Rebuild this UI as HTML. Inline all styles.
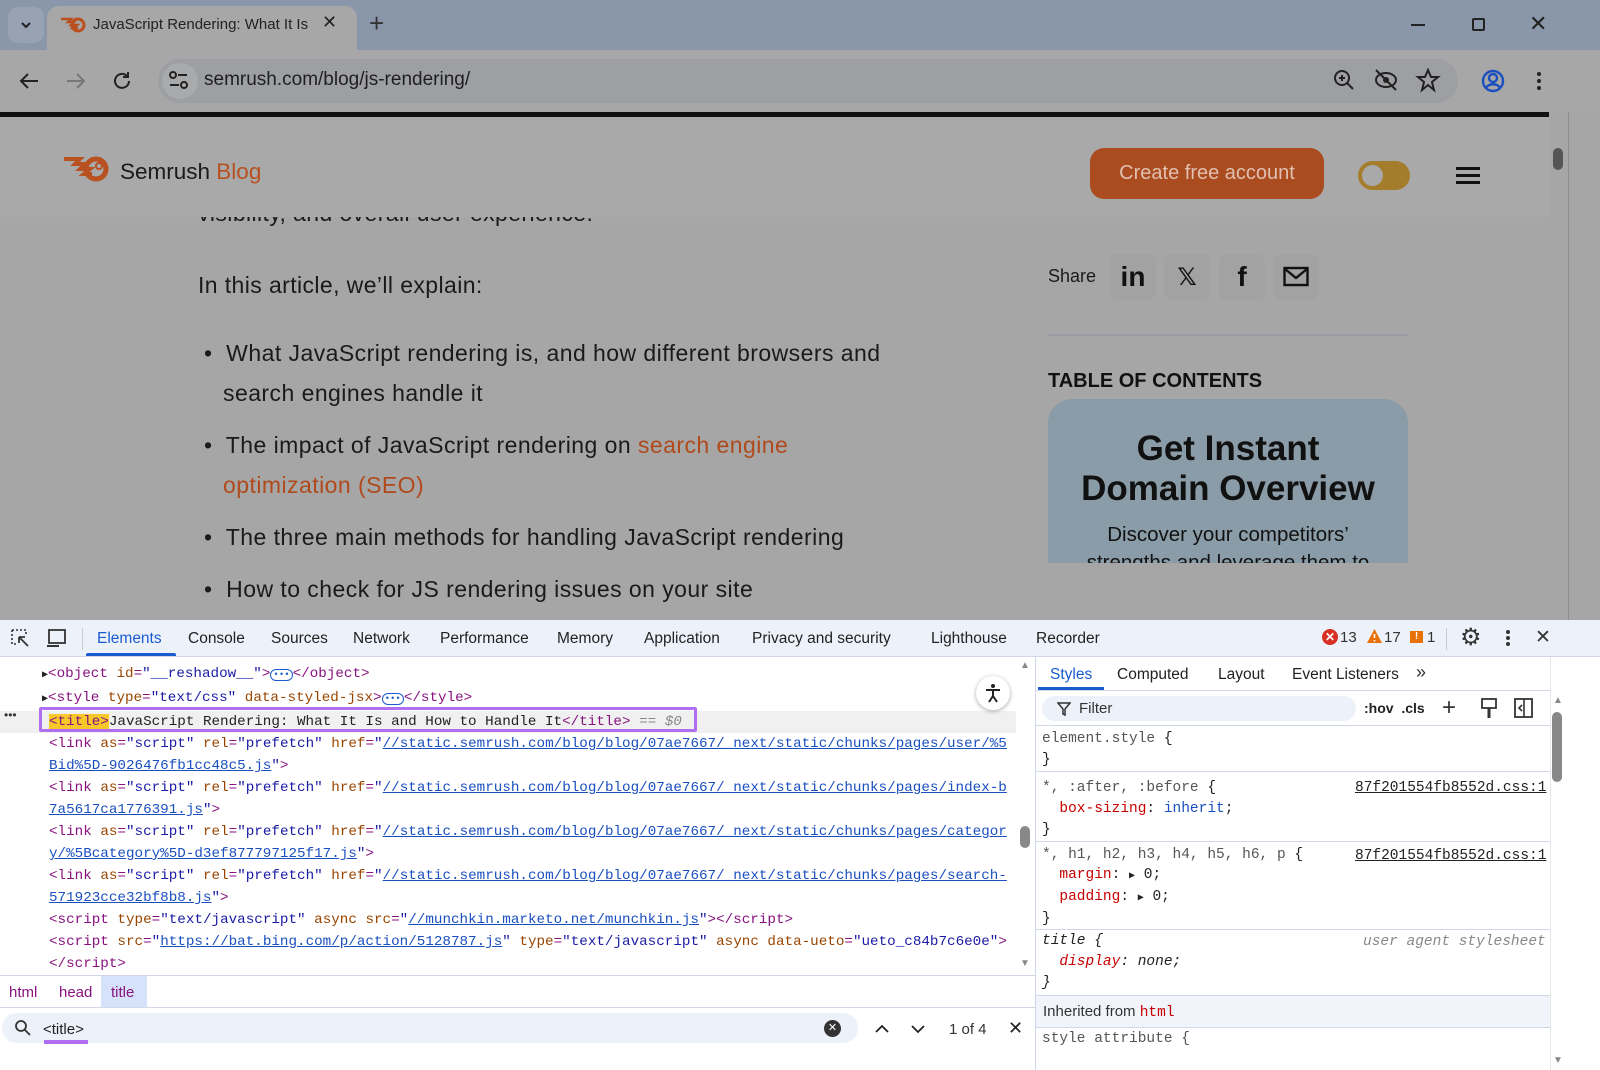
<!DOCTYPE html>
<html><head><meta charset="utf-8"><style>
*{margin:0;padding:0;box-sizing:border-box}
body{width:1600px;height:1070px;overflow:hidden;position:relative;background:#a6a6a6;font-family:"Liberation Sans",sans-serif}
.a{position:absolute;white-space:nowrap}
.m{font-family:"Liberation Mono",monospace;font-size:14.5px}
.t{color:#881280}.n{color:#994500}.v{color:#1a1aa6}.l{color:#1a4fc0;text-decoration:underline}
.p{color:#c80000}.g{color:#555}
.tab{position:absolute;top:630px;font-size:15.5px;color:#222}
.code{font-size:14.25px}
.code div{white-space:nowrap}
</style></head><body>
<!-- tab strip -->
<div class="a" style="left:0;top:0;width:1600px;height:50px;background:#8a97aa"></div>
<div class="a" style="left:8px;top:7px;width:36px;height:36px;border-radius:10px;background:#97a2b2"></div>
<svg class="a" style="left:18px;top:17px" width="16" height="16"><path d="M4 6l4 4 4-4" stroke="#222" stroke-width="2" fill="none"/></svg>
<div class="a" style="left:47px;top:6px;width:310px;height:46px;border-radius:12px 12px 0 0;background:#a7a7a7"></div>
<svg class="a" style="left:60px;top:16px" width="26" height="18"><path d="M1 3h10l-3 3h6l-3 3h6l-4 3h5" stroke="#b8501f" stroke-width="2.5" fill="none"/><circle cx="18" cy="9" r="6" fill="none" stroke="#b8501f" stroke-width="3"/></svg>
<div class="a" style="left:93px;top:16px;font-size:15px;color:#222">JavaScript Rendering: What It Is</div>
<div class="a" style="left:322px;top:12px;font-size:18px;color:#222">✕</div>
<div class="a" style="left:369px;top:8px;font-size:26px;color:#333">+</div>
<div class="a" style="left:1411px;top:24px;width:14px;height:2px;background:#222"></div>
<div class="a" style="left:1472px;top:18px;width:13px;height:13px;border:2px solid #222;border-radius:2px"></div>
<div class="a" style="left:1529px;top:11px;font-size:22px;color:#222">✕</div>
<!-- toolbar -->
<div class="a" style="left:0;top:50px;width:1600px;height:62px;background:#a7a7a7"></div>
<svg class="a" style="left:18px;top:70px" width="90" height="22"><path d="M20 11H4M10 4l-7 7 7 7" stroke="#222" stroke-width="2" fill="none"/><path d="M65 11H49M59 4l7 7-7 7" stroke="#777" stroke-width="2" fill="none"/></svg>
<svg class="a" style="left:110px;top:69px" width="24" height="24"><path d="M19 12a7 7 0 1 1-2-5M18 3v5h-5" stroke="#222" stroke-width="2" fill="none"/></svg>
<div class="a" style="left:158px;top:59px;width:1300px;height:44px;border-radius:22px;background:#9d9fa2"></div>
<div class="a" style="left:162px;top:63px;width:36px;height:36px;border-radius:18px;background:#a9aaac"></div>
<svg class="a" style="left:168px;top:70px" width="22" height="20"><circle cx="5" cy="5" r="3" fill="none" stroke="#222" stroke-width="2"/><path d="M10 5h9M2 15h9" stroke="#222" stroke-width="2"/><circle cx="16" cy="15" r="3" fill="none" stroke="#222" stroke-width="2"/></svg>
<div class="a" style="left:204px;top:69px;font-size:19px;color:#1f1f1f">semrush.com/blog/js-rendering/</div>
<svg class="a" style="left:1332px;top:68px" width="110" height="26"><circle cx="10" cy="10" r="7" fill="none" stroke="#222" stroke-width="2"/><path d="M15 15l6 6M7 10h6M10 7v6" stroke="#222" stroke-width="2"/><ellipse cx="54" cy="12" rx="10" ry="7" fill="none" stroke="#222" stroke-width="2"/><circle cx="54" cy="12" r="3" fill="#222"/><path d="M44 2l20 20" stroke="#222" stroke-width="2"/><path d="M96 2l3 7h7l-6 5 2 8-6-5-6 5 2-8-6-5h7z" fill="none" stroke="#222" stroke-width="2"/></svg>
<svg class="a" style="left:1480px;top:68px" width="26" height="26"><circle cx="13" cy="13" r="10" fill="none" stroke="#1a4fc0" stroke-width="2.4"/><circle cx="13" cy="10" r="4" fill="none" stroke="#1a4fc0" stroke-width="2.4"/><path d="M6 20c3-5 11-5 14 0" stroke="#1a4fc0" stroke-width="2.4" fill="none"/></svg>
<div class="a" style="left:1537px;top:72px;width:4px;height:4px;border-radius:2px;background:#222;box-shadow:0 7px 0 #222,0 14px 0 #222"></div>
<div class="a" style="left:0;top:112px;width:1549px;height:5px;background:#111"></div>
<!-- page -->
<div class="a" style="left:0;top:117px;width:1549px;height:100px;background:#a9a9a9"></div>
<svg class="a" style="left:62px;top:155px" width="48" height="30"><path d="M2 4h16l-5 5h10l-5 5h10l-6 5h8" stroke="#b8501f" stroke-width="4" fill="none"/><circle cx="34" cy="14" r="10" fill="none" stroke="#b8501f" stroke-width="5"/><circle cx="37" cy="11" r="3" fill="none" stroke="#b8501f" stroke-width="2"/></svg>
<div class="a" style="left:120px;top:159px;font-size:22.5px;color:#1a1a1a">Semrush <span style="color:#b8501f">Blog</span></div>
<div class="a" style="left:1090px;top:148px;width:234px;height:51px;border-radius:14px;background:#ab4b20;color:#e0c0b0;font-size:20px;text-align:center;line-height:51px">Create free account</div>
<div class="a" style="left:1358px;top:161px;width:52px;height:29px;border-radius:15px;background:#a37d2c"></div>
<div class="a" style="left:1362px;top:165px;width:21px;height:21px;border-radius:11px;background:#a9a9a9"></div>
<div class="a" style="left:1456px;top:167px;width:24px;height:3px;background:#111;box-shadow:0 7px 0 #111,0 14px 0 #111"></div>
<div class="a" style="left:198px;top:200px;font-size:23px;letter-spacing:0.4px;color:#1a1a1a;clip-path:inset(17px 0 0 0)">visibility, and overall user experience.</div>
<div class="a" style="left:198px;top:270px;font-size:23px;letter-spacing:0.4px;color:#1a1a1a;line-height:30px">In this article, we’ll explain:</div>
<div class="a" style="left:204px;top:333px;font-size:23px;letter-spacing:0.45px;line-height:40px;color:#1a1a1a">
<div>•&nbsp; What JavaScript rendering is, and how different browsers and</div>
<div style="padding-left:19px">search engines handle it</div>
<div style="margin-top:12px">•&nbsp; The impact of JavaScript rendering on <span style="color:#b04a1c">search engine</span></div>
<div style="padding-left:19px;color:#b04a1c">optimization (SEO)</div>
<div style="margin-top:12px">•&nbsp; The three main methods for handling JavaScript rendering</div>
<div style="margin-top:12px">•&nbsp; How to check for JS rendering issues on your site</div>
</div>
<div class="a" style="left:1048px;top:266px;font-size:18px;color:#1a1a1a">Share</div>
<div class="a" style="left:1110px;top:254px;width:46px;height:46px;border-radius:8px;background:#a2a2a2;font:bold 28px 'Liberation Sans';text-align:center;line-height:46px;color:#111">in</div>
<div class="a" style="left:1164px;top:254px;width:46px;height:46px;border-radius:8px;background:#a2a2a2;font:bold 24px 'DejaVu Sans';text-align:center;line-height:46px;color:#111">𝕏</div>
<div class="a" style="left:1219px;top:254px;width:46px;height:46px;border-radius:8px;background:#a2a2a2;font:bold 28px 'Liberation Sans';text-align:center;line-height:46px;color:#111">f</div>
<div class="a" style="left:1273px;top:254px;width:46px;height:46px;border-radius:8px;background:#a2a2a2"></div>
<svg class="a" style="left:1283px;top:266px" width="26" height="22"><rect x="1.5" y="2" width="23" height="17" fill="none" stroke="#111" stroke-width="2.4"/><path d="M2 3l11 9 11-9" stroke="#111" stroke-width="2.4" fill="none"/></svg>
<div class="a" style="left:1048px;top:334px;width:360px;height:2px;background:#9c9ca4"></div>
<div class="a" style="left:1048px;top:370px;font-size:20px;font-weight:bold;color:#111">TABLE OF CONTENTS</div>
<div class="a" style="left:1048px;top:399px;width:360px;height:164px;border-radius:24px 24px 0 0;background:#8a9ca8;overflow:hidden;text-align:center;color:#111">
<div style="margin-top:30px;font-size:35px;font-weight:bold;line-height:40px">Get Instant<br>Domain Overview</div>
<div style="margin-top:12px;font-size:20.5px;line-height:28px">Discover your competitors’<br>strengths and leverage them to</div>
</div>
<div class="a" style="left:1549px;top:112px;width:20px;height:508px;background:#a6a6a6"></div>
<div class="a" style="left:1553px;top:148px;width:10px;height:22px;border-radius:5px;background:#555"></div>
<div class="a" style="left:1568px;top:112px;width:1px;height:508px;background:#8e8e8e"></div>
<!-- devtools -->
<div class="a" style="left:0;top:620px;width:1600px;height:450px;background:#fff"></div>
<div class="a" style="left:0;top:620px;width:1600px;height:37px;background:#edf2fa;border-bottom:1px solid #d0d8e8"></div>
<svg class="a" style="left:10px;top:628px" width="60" height="22"><path d="M2 2h14v6M2 2v14h6" stroke="#333" stroke-width="1.6" stroke-dasharray="2 2" fill="none"/><path d="M9 9l9 9M9 9v6M9 9h6" stroke="#333" stroke-width="1.8" fill="none"/><rect x="39" y="2" width="16" height="13" fill="none" stroke="#333" stroke-width="1.8"/><path d="M37 18h12" stroke="#333" stroke-width="2"/></svg>
<div class="a" style="left:82px;top:628px;width:1px;height:22px;background:#ccc"></div>
<div class="tab" style="left:97px;color:#1a5bd0">Elements</div>
<div class="a" style="left:86px;top:653px;width:90px;height:3px;background:#1a5bd0;border-radius:2px 2px 0 0"></div>
<div class="tab" style="left:188px">Console</div>
<div class="tab" style="left:271px">Sources</div>
<div class="tab" style="left:353px">Network</div>
<div class="tab" style="left:440px">Performance</div>
<div class="tab" style="left:557px">Memory</div>
<div class="tab" style="left:644px">Application</div>
<div class="tab" style="left:752px">Privacy and security</div>
<div class="tab" style="left:931px">Lighthouse</div>
<div class="tab" style="left:1036px">Recorder</div>
<div class="a" style="left:1322px;top:629px;width:16px;height:16px;border-radius:8px;background:#d93025;color:#fff;font-size:12px;text-align:center;line-height:16px;font-weight:bold">✕</div>
<div class="a" style="left:1340px;top:629px;font-size:15px;color:#333">13</div>
<svg class="a" style="left:1366px;top:628px" width="17" height="16"><path d="M8.5 1L16 15H1z" fill="#e8710a"/><path d="M8.5 6v4M8.5 12v1.5" stroke="#fff" stroke-width="1.6"/></svg>
<div class="a" style="left:1384px;top:629px;font-size:15px;color:#333">17</div>
<div class="a" style="left:1410px;top:631px;width:13px;height:12px;background:#e8710a;color:#fff;font-size:10px;text-align:center;line-height:12px;font-weight:bold">!</div>
<div class="a" style="left:1427px;top:629px;font-size:15px;color:#333">1</div>
<div class="a" style="left:1446px;top:628px;width:1px;height:22px;background:#ccc"></div>
<div class="a" style="left:1460px;top:623px;font-size:24px;color:#333">⚙</div>
<div class="a" style="left:1506px;top:630px;width:4px;height:4px;border-radius:2px;background:#333;box-shadow:0 6px 0 #333,0 12px 0 #333"></div>
<div class="a" style="left:1535px;top:626px;font-size:19px;color:#333">✕</div>
<!-- elements panel -->
<div class="m code" style="position:absolute;left:0;top:663px;width:1016px;height:310px;overflow:hidden;line-height:22px;color:#222">
<div style="padding-left:42px"><span style="font-size:10px">▶</span><span class="t">&lt;object </span><span class="n">id</span><span class="t">=</span><span class="v">"__reshadow__"</span><span class="t">&gt;</span><span style="border:1px solid #1a5bd0;border-radius:6px;font-size:9px;color:#1a5bd0;padding:0 2px">•••</span><span class="t">&lt;/object&gt;</span></div>
<div style="padding-left:42px"><span style="font-size:10px">▶</span><span class="t">&lt;style </span><span class="n">type</span><span class="t">=</span><span class="v">"text/css"</span> <span class="n">data-styled-jsx</span><span class="t">&gt;</span><span style="border:1px solid #1a5bd0;border-radius:6px;font-size:9px;color:#1a5bd0;padding:0 2px">•••</span><span class="t">&lt;/style&gt;</span></div>
<div style="padding-left:49px;background:#f0f0f0"><span class="t" style="background:#f6c82a">&lt;title&gt;</span>JavaScript Rendering: What It Is and How to Handle It<span class="t">&lt;/title&gt;</span> <span style="color:#888;font-style:italic">== $0</span></div>
<div style="padding-left:49px"><span class="t">&lt;link </span><span class="n">as</span><span class="t">=</span><span class="v">"script"</span> <span class="n">rel</span><span class="t">=</span><span class="v">"prefetch"</span> <span class="n">href</span><span class="t">=</span><span class="v">"</span><span class="l">//static.semrush.com/blog/blog/07ae7667/_next/static/chunks/pages/user/%5</span></div>
<div style="padding-left:49px"><span class="l">Bid%5D-9026476fb1cc48c5.js</span><span class="v">"</span><span class="t">&gt;</span></div>
<div style="padding-left:49px"><span class="t">&lt;link </span><span class="n">as</span><span class="t">=</span><span class="v">"script"</span> <span class="n">rel</span><span class="t">=</span><span class="v">"prefetch"</span> <span class="n">href</span><span class="t">=</span><span class="v">"</span><span class="l">//static.semrush.com/blog/blog/07ae7667/_next/static/chunks/pages/index-b</span></div>
<div style="padding-left:49px"><span class="l">7a5617ca1776391.js</span><span class="v">"</span><span class="t">&gt;</span></div>
<div style="padding-left:49px"><span class="t">&lt;link </span><span class="n">as</span><span class="t">=</span><span class="v">"script"</span> <span class="n">rel</span><span class="t">=</span><span class="v">"prefetch"</span> <span class="n">href</span><span class="t">=</span><span class="v">"</span><span class="l">//static.semrush.com/blog/blog/07ae7667/_next/static/chunks/pages/categor</span></div>
<div style="padding-left:49px"><span class="l">y/%5Bcategory%5D-d3ef877797125f17.js</span><span class="v">"</span><span class="t">&gt;</span></div>
<div style="padding-left:49px"><span class="t">&lt;link </span><span class="n">as</span><span class="t">=</span><span class="v">"script"</span> <span class="n">rel</span><span class="t">=</span><span class="v">"prefetch"</span> <span class="n">href</span><span class="t">=</span><span class="v">"</span><span class="l">//static.semrush.com/blog/blog/07ae7667/_next/static/chunks/pages/search-</span></div>
<div style="padding-left:49px"><span class="l">571923cce32bf8b8.js</span><span class="v">"</span><span class="t">&gt;</span></div>
<div style="padding-left:49px"><span class="t">&lt;script </span><span class="n">type</span><span class="t">=</span><span class="v">"text/javascript"</span> <span class="n">async src</span><span class="t">=</span><span class="v">"</span><span class="l">//munchkin.marketo.net/munchkin.js</span><span class="v">"</span><span class="t">&gt;&lt;/script&gt;</span></div>
<div style="padding-left:49px"><span class="t">&lt;script </span><span class="n">src</span><span class="t">=</span><span class="v">"</span><span class="l">https://bat.bing.com/p/action/5128787.js</span><span class="v">"</span> <span class="n">type</span><span class="t">=</span><span class="v">"text/javascript"</span> <span class="n">async data-ueto</span><span class="t">=</span><span class="v">"ueto_c84b7c6e0e"</span><span class="t">&gt;</span></div>
<div style="padding-left:49px"><span class="t">&lt;/script&gt;</span></div>
</div>
<div class="a" style="left:39px;top:707px;width:658px;height:25px;border:3px solid #b06ef0;border-radius:2px"></div>
<div class="a" style="left:4px;top:708px;font-size:12px;color:#333">•••</div>
<div class="a" style="left:976px;top:676px;width:34px;height:34px;border-radius:17px;background:#fff;box-shadow:0 1px 4px rgba(0,0,0,.35)"></div>
<svg class="a" style="left:983px;top:683px" width="20" height="20"><circle cx="10" cy="3" r="2" fill="#222"/><path d="M3 7h14M10 7v6M10 13l-4 6M10 13l4 6" stroke="#222" stroke-width="2" fill="none"/></svg>
<div class="a" style="left:1020px;top:660px;font-size:10px;color:#888">▲</div>
<div class="a" style="left:1020px;top:826px;width:10px;height:22px;border-radius:5px;background:#888"></div>
<div class="a" style="left:1020px;top:958px;font-size:10px;color:#888">▼</div>
<div class="a" style="left:1035px;top:657px;width:1px;height:413px;background:#d0d8e8"></div>
<div class="a" style="left:0;top:975px;width:1035px;height:1px;background:#d0d8e8"></div>
<div class="a" style="left:101px;top:976px;width:46px;height:31px;background:#d6e2fa"></div>
<div class="a" style="left:9px;top:984px;font-size:15px;color:#881280">html</div>
<div class="a" style="left:59px;top:984px;font-size:15px;color:#881280">head</div>
<div class="a" style="left:111px;top:984px;font-size:15px;color:#881280">title</div>
<div class="a" style="left:0;top:1007px;width:1035px;height:1px;background:#d0d8e8"></div>
<div class="a" style="left:2px;top:1013px;width:856px;height:30px;border-radius:15px;background:#edf2fa"></div>
<svg class="a" style="left:14px;top:1019px" width="18" height="18"><circle cx="7" cy="7" r="5" fill="none" stroke="#333" stroke-width="1.8"/><path d="M11 11l5 5" stroke="#333" stroke-width="1.8"/></svg>
<div class="a" style="left:43px;top:1021px;font-size:15px;color:#222">&lt;title&gt;</div>
<div class="a" style="left:44px;top:1040px;width:44px;height:4px;background:#b06ef0"></div>
<div class="a" style="left:824px;top:1020px;width:17px;height:17px;border-radius:9px;background:#333;color:#fff;font-size:11px;text-align:center;line-height:17px">✕</div>
<svg class="a" style="left:874px;top:1022px" width="60" height="14"><path d="M2 10l6-6 6 6M38 4l6 6 6-6" stroke="#222" stroke-width="1.8" fill="none"/></svg>
<div class="a" style="left:949px;top:1021px;font-size:15px;color:#333">1 of 4</div>
<div class="a" style="left:1008px;top:1018px;font-size:18px;color:#222">✕</div>
<!-- styles panel -->
<div class="a" style="left:1050px;top:666px;font-size:15.5px;color:#1a5bd0">Styles</div>
<div class="a" style="left:1038px;top:687px;width:66px;height:3px;background:#1a5bd0"></div>
<div class="a" style="left:1117px;top:666px;font-size:15.5px;color:#222">Computed</div>
<div class="a" style="left:1218px;top:666px;font-size:15.5px;color:#222">Layout</div>
<div class="a" style="left:1292px;top:666px;font-size:15.5px;color:#222">Event Listeners</div>
<div class="a" style="left:1416px;top:662px;font-size:18px;color:#333">»</div>
<div class="a" style="left:1036px;top:690px;width:514px;height:1px;background:#d0d8e8"></div>
<div class="a" style="left:1042px;top:696px;width:314px;height:25px;border-radius:13px;background:#edf2fa"></div>
<svg class="a" style="left:1057px;top:702px" width="14" height="14"><path d="M1 1h12l-5 6v6l-2-1V7z" fill="none" stroke="#333" stroke-width="1.5"/></svg>
<div class="a" style="left:1079px;top:700px;font-size:15px;color:#333">Filter</div>
<div class="a" style="left:1364px;top:700px;font-size:14px;color:#222;font-weight:bold">:hov&nbsp; .cls</div>
<div class="a" style="left:1442px;top:694px;font-size:24px;color:#333">+</div>
<svg class="a" style="left:1480px;top:698px" width="60" height="22"><rect x="2" y="1" width="14" height="9" fill="none" stroke="#333" stroke-width="1.8"/><path d="M9 10v10" stroke="#333" stroke-width="3"/><rect x="35" y="1" width="17" height="18" fill="none" stroke="#333" stroke-width="1.8"/><path d="M44 1v18M42 7l-3 3 3 3" stroke="#333" stroke-width="1.6" fill="none"/></svg>
<div class="a" style="left:1036px;top:725px;width:514px;height:1px;background:#d0d8e8"></div>
<div class="a m" style="left:1042px;top:729px;line-height:21px;color:#222"><span class="g">element.style</span> {<br>}</div>
<div class="a" style="left:1036px;top:771px;width:514px;height:1px;background:#d0d8e8"></div>
<div class="a m" style="left:1042px;top:778px;line-height:21px;color:#222"><span class="g">*, :after, :before</span> {<br>&nbsp;&nbsp;<span class="p">box-sizing</span>: <span style="color:#1a4fc0">inherit</span>;<br>}</div>
<div class="a m" style="left:1355px;top:780px;color:#222;text-decoration:underline">87f201554fb8552d.css:1</div>
<div class="a" style="left:1036px;top:841px;width:514px;height:1px;background:#d0d8e8"></div>
<div class="a m" style="left:1042px;top:845px;line-height:20px;color:#222"><span class="g">*, h1, h2, h3, h4, h5, h6, p</span> {<br>&nbsp;&nbsp;<span class="p">margin</span>: <span style="font-size:10px">▶</span> 0;<br>&nbsp;&nbsp;<span class="p">padding</span>: <span style="font-size:10px">▶</span> 0;<br>}</div>
<div class="a m" style="left:1355px;top:848px;color:#222;text-decoration:underline">87f201554fb8552d.css:1</div>
<div class="a" style="left:1036px;top:929px;width:514px;height:1px;background:#d0d8e8"></div>
<div class="a m" style="left:1042px;top:931px;line-height:21px;color:#222;font-style:italic">title {<br>&nbsp;&nbsp;<span class="p">display</span>: none;<br>}</div>
<div class="a m" style="left:1363px;top:934px;color:#888;font-style:italic">user agent stylesheet</div>
<div class="a" style="left:1036px;top:995px;width:514px;height:33px;background:#f1f4fb;border-top:1px solid #d0d8e8;border-bottom:1px solid #d0d8e8"></div>
<div class="a" style="left:1043px;top:1003px;font-size:15px;color:#333">Inherited from <span class="m" style="color:#c80000">html</span></div>
<div class="a m" style="left:1042px;top:1031px;color:#555">style attribute {</div>
<div class="a" style="left:1550px;top:657px;width:1px;height:413px;background:#e6e6e6"></div>
<div class="a" style="left:1553px;top:695px;font-size:10px;color:#888">▲</div>
<div class="a" style="left:1552px;top:712px;width:10px;height:70px;border-radius:5px;background:#888"></div>
<div class="a" style="left:1553px;top:1055px;font-size:10px;color:#888">▼</div>
</body></html>
